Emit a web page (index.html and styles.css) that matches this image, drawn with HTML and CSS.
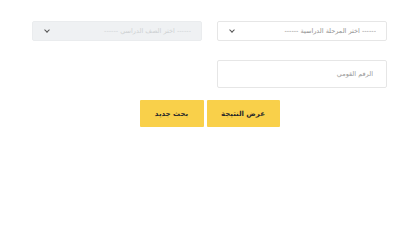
FILE: index.html
```html
<!DOCTYPE html>
<html lang="ar" dir="rtl">

<head>
    <meta charset="UTF-8">
    <meta name="viewport" content="width=device-width, initial-scale=1.0">
    <title>نتيجة الطالب</title>
    <link rel="stylesheet" href="styles.css">
</head>

<body>
    <div class="outer">
        <form class="form" id="form1">
            <div class="field">
                <select class="select" name="stage" id="stage">
                    <option value="">------ اختر المرحلة الدراسية ------</option>
                </select>
                <span class="arrow"></span>
            </div>
            <div class="field">
                <select class="select" name="grade" id="grade" disabled>
                    <option value="">------ اختر الصف الدراسي ------</option>
                </select>
                <span class="arrow"></span>
            </div>
            <div class="field">
                <input class="input" type="text" name="nid" id="nid" placeholder="الرقم القومي">
            </div>
            <div class="field"></div>
            <div class="btns">
                <button type="button" class="btn" id="submit">عرض النتيجة</button>
                <button type="reset" class="btn btn-reset">بحث جديد</button>
            </div>
        </form>
    </div>
</body>

</html>
```

FILE: styles.css
```css
body {
    margin: 0;
    font-family: "DejaVu Sans", sans-serif;
    background: #fff;
}

.outer {
    padding: 21px 13px 0 32px;
}

.form {
    display: grid;
    grid-template-columns: 170px 170px;
    column-gap: 15px;
    row-gap: 19px;
}

.field {
    position: relative;
}

.select,
.input {
    display: block;
    margin: 0;
    width: 100%;
    box-sizing: border-box;
    border: 1px solid #e6e6e6;
    border-radius: 2px;
    background: #fff;
    font-family: inherit;
    font-size: 6.5px;
    color: #8f8f8f;
    outline: none;
}

.select {
    height: 20px;
    padding: 0 10px 0 20px;
    appearance: none;
    -webkit-appearance: none;
}

.select:disabled {
    background: #e9ecef;
    color: #b8bcc0;
    border-color: #e2e5e8;
}

.arrow {
    position: absolute;
    left: 13px;
    top: 7px;
    width: 3px;
    height: 3px;
    border-left: 1px solid #555;
    border-bottom: 1px solid #555;
    transform: rotate(-45deg);
}

.input {
    height: 28px;
    padding: 0 13px;
}

.input::placeholder {
    color: #9a9a9a;
}

.btns {
    grid-column: 1 / 3;
    display: flex;
    justify-content: center;
    gap: 3px;
    margin-top: -7px;
}

.btn {
    height: 27px;
    border: none;
    border-radius: 1px;
    background: #f9d04a;
    color: #2a2a2a;
    font-family: inherit;
    font-weight: bold;
    font-size: 7px;
    width: 73px;
}

.btn-reset {
    width: 64px;
}
```
